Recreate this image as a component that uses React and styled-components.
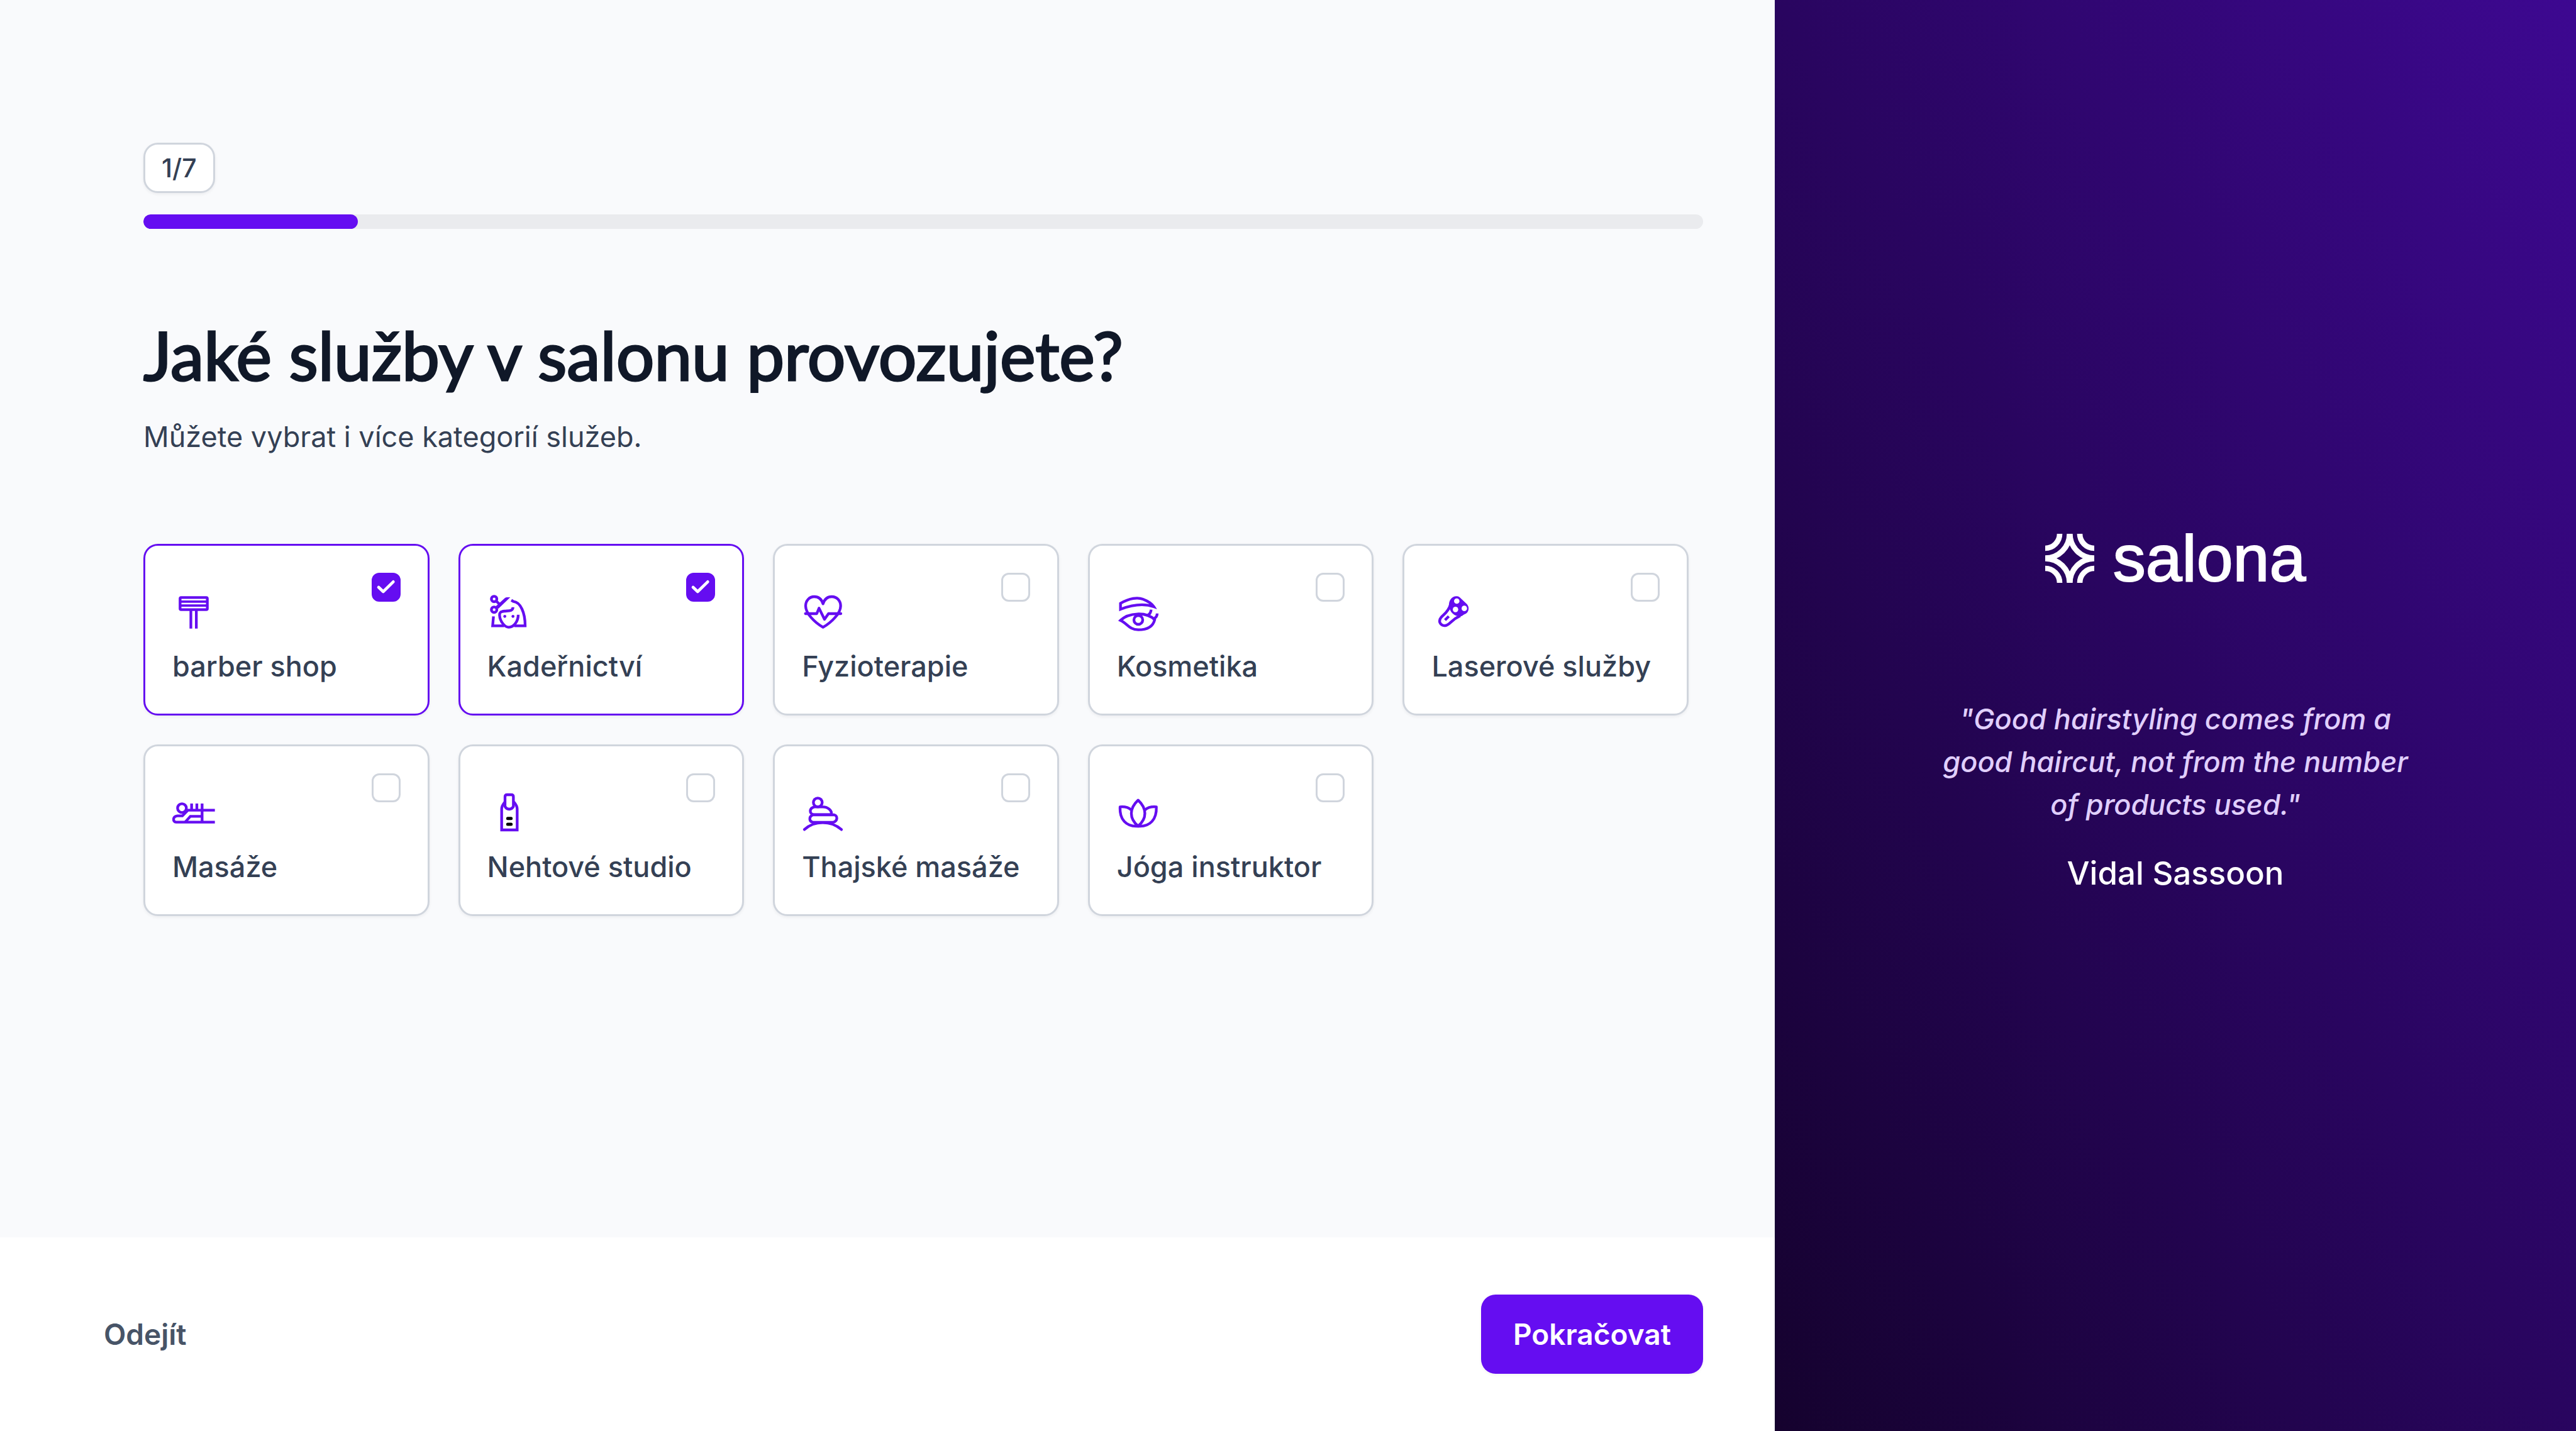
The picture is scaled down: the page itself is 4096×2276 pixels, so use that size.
import React, { useState } from "react";
import styled, { createGlobalStyle, css } from "styled-components";

const color = {
  brand: "#650df1",
  ink: "#101828",
  text: "#344054",
  muted: "#475467",
  line: "#d0d5dd",
  track: "#eaebee",
  canvas: "#f9fafc",
  lilac: "#e0cffc",
};

const GlobalStyle = createGlobalStyle`
  *, *::before, *::after { box-sizing: border-box; }
  body {
    margin: 0;
    background: #fff;
    font-family: Inter, "Liberation Sans", sans-serif;
    color: ${color.text};
  }
  h1, p, figure, fieldset { margin: 0; padding: 0; border: 0; }
`;

const Page = styled.div`
  display: flex;
  min-height: 100vh;
`;

const Wizard = styled.div`
  flex: 1;
  min-width: 0;
  display: flex;
  flex-direction: column;
  background: ${color.canvas};
`;

const Main = styled.main`
  flex: 1;
  display: flex;
  flex-direction: column;
  align-items: stretch;
  padding: 227px 114px 90px 228px;
`;

const StepBadge = styled.span`
  align-self: flex-start;
  padding: 7px 26px;
  border: 3px solid ${color.line};
  border-radius: 23px;
  background: #fff;
  box-shadow: 0 2px 5px rgba(16, 24, 40, 0.06);
  font-size: 41px;
  line-height: 60px;
  font-weight: 500;
`;

const Track = styled.div`
  height: 23px;
  margin-top: 34px;
  border-radius: 12px;
  background: ${color.track};
  overflow: hidden;
`;

const TrackFill = styled.div`
  height: 100%;
  border-radius: 12px;
  background: ${color.brand};
`;

const Title = styled.h1`
  margin-top: 132px;
  font-family: Lato, Inter, sans-serif;
  font-size: 107px;
  line-height: 136px;
  font-weight: 400;
  -webkit-text-stroke: 3px currentColor;
  color: ${color.ink};
`;

const Lead = styled.p`
  margin-top: 29px;
  font-size: 45px;
  line-height: 68px;
`;

const ServiceGrid = styled.fieldset`
  display: grid;
  grid-template-columns: repeat(5, minmax(0, 1fr));
  gap: 46px;
  margin-top: 136px;
  padding-right: 23px;
`;

const Card = styled.label`
  display: grid;
  grid-template-columns: 1fr auto;
  row-gap: 21px;
  padding: 43px;
  border: 3px solid ${(p) => (p.$active ? color.brand : color.line)};
  border-radius: 23px;
  background: #fff;
  box-shadow: 0 2px 5px rgba(16, 24, 40, 0.06);
  cursor: pointer;
`;

const ServiceIcon = styled.svg`
  width: 68px;
  height: 68px;
  margin-top: 28px;
  fill: none;
  stroke: ${color.brand};
  stroke-width: 13;
`;

const Tick = styled.span`
  display: grid;
  align-self: start;
  width: 46px;
  height: 46px;
  > * { grid-area: 1 / 1; }
`;

const TickInput = styled.input`
  appearance: none;
  width: 46px;
  height: 46px;
  margin: 0;
  border: 3px solid ${color.line};
  border-radius: 12px;
  background: #fff;
  cursor: pointer;
  ${(p) =>
    p.checked &&
    css`
      border-color: ${color.brand};
      background: ${color.brand};
    `}
`;

const TickMark = styled.svg`
  width: 46px;
  height: 46px;
  fill: none;
  stroke: #fff;
  stroke-width: 14;
  stroke-linecap: round;
  stroke-linejoin: round;
  pointer-events: none;
`;

const ServiceName = styled.span`
  grid-column: 1 / -1;
  font-size: 45px;
  line-height: 64px;
  font-weight: 500;
  white-space: nowrap;
`;

const Footer = styled.footer`
  display: flex;
  justify-content: space-between;
  align-items: center;
  padding: 91px 114px;
  background: #fff;
`;

const Button = styled.button`
  padding: 29px 51px;
  border: 0;
  border-radius: 23px;
  background: ${(p) => (p.$primary ? color.brand : "transparent")};
  color: ${(p) => (p.$primary ? "#fff" : color.muted)};
  box-shadow: ${(p) => (p.$primary ? "0 2px 5px rgba(16, 24, 40, 0.05)" : "none")};
  font: 600 46px/68px Inter, sans-serif;
  cursor: pointer;
`;

const Aside = styled.aside`
  flex: 0 0 1274px;
  display: flex;
  flex-direction: column;
  align-items: center;
  justify-content: center;
  padding-bottom: 4px;
  background: linear-gradient(to top right, #15022e 0%, #3d0891 100%);
`;

const Brand = styled.div`
  display: flex;
  align-items: center;
  gap: 30px;
  height: 78px;
  color: #fff;
`;

const BrandMark = styled.svg`
  width: 78px;
  height: 78px;
  fill: none;
  stroke: currentColor;
  stroke-width: 26;
`;

const BrandName = styled.span`
  font-family: "Liberation Sans", Arial, sans-serif;
  font-size: 104px;
  line-height: 78px;
  -webkit-text-stroke: 2px currentColor;
`;

const Quote = styled.figure`
  margin-top: 183px;
  max-width: 780px;
  text-align: center;
`;

const QuoteText = styled.blockquote`
  margin: 0;
  color: ${color.lilac};
  font-size: 45px;
  line-height: 68px;
  font-weight: 500;
  font-style: italic;
`;

const Author = styled.figcaption`
  margin-top: 41px;
  color: #fff;
  font-size: 51px;
  line-height: 68px;
  font-weight: 500;
`;

const icons = {
  barber: (
    <>
      <rect x="37" y="34" width="130" height="58" rx="5" />
      <path d="M38 53.500H166M38 72.500H166" strokeWidth="11" />
      <path d="M88.500 96V182M114.500 96V182" />
    </>
  ),
  hair: (
    <>
      <circle cx="32" cy="41" r="13" />
      <circle cx="32" cy="92" r="13" />
      <path d="M44 53L58 66" />
      <path d="M40 76L84 36Q88 33 93 33H109L52 88Z" fill={color.brand} stroke="none" />
      <path d="M114 47L124 53C158 56 180 106 180 169H128" />
      <path d="M29 124L25 169H80" />
      <path d="M122 80C122 100 100 97 82 99C62 101 58 106 58 118C60 150 84 176 102 176C128 176 147 145 147 116" />
      <circle cx="83" cy="124" r="7" fill={color.brand} stroke="none" />
      <circle cx="122" cy="124" r="7" fill={color.brand} stroke="none" />
    </>
  ),
  heart: (
    <g strokeLinecap="round" strokeLinejoin="round">
      <path d="M101 64C94 42 78 30 59 30C35 30 18 50 18 74C18 110 62 154 101 176C140 154 185 110 185 74C185 50 167 30 143 30C124 30 108 42 101 64Z" />
      <path d="M17 111H71L82 85L108 138L127 111H186" />
    </g>
  ),
  eye: (
    <>
      <path d="M17 62C60 36 100 32 124 42C150 52 166 62 176 78C130 62 70 70 17 90Z" />
      <path d="M17 143C55 106 140 100 180 140C172 172 148 188 102 188C58 188 50 158 17 143Z" />
      <circle cx="102" cy="141" r="21" />
      <path d="M163 92Q162 112 144 120M192 110Q192 128 174 136" />
    </>
  ),
  laser: (
    <>
      <path d="M90 70C82 100 62 112 47 128C30 148 44 170 66 168C88 166 92 142 138 121" />
      <path d="M120 28C131 28 136 34 142 40L170 66C184 82 178 108 158 114C150 118 146 124 138 124C108 124 88 104 84 74C82 50 96 28 120 28Z" fill={color.brand} stroke="none" />
      <circle cx="121" cy="51" r="13" fill="#fff" stroke="none" />
      <circle cx="115" cy="91" r="13" fill="#fff" stroke="none" />
      <circle cx="157" cy="86" r="13" fill="#fff" stroke="none" />
      <path d="M83 124L65 142" />
    </>
  ),
  massage: (
    <>
      <circle cx="46" cy="82" r="21" />
      <path d="M92 60V92M117 60V92M142 60V150M203 92H74L48 119H24C0 122 2 148 18 149H203" />
      <path d="M62 148L86 121H142" />
    </>
  ),
  nails: (
    <>
      <path d="M84 52Q68 70 68 86V186H142V86Q142 70 126 52" />
      <path d="M84 74V28Q84 18 94 18H114Q124 18 124 28V74Q118 86 104 87Q90 86 84 74Z" />
      <path d="M97 131H113M97 159H113" stroke="#000" strokeWidth="15" strokeLinecap="round" />
    </>
  ),
  stones: (
    <g strokeLinecap="round">
      <circle cx="76" cy="55" r="21" />
      <path d="M60 76C34 82 34 110 58 113H140C146 94 124 76 100 76Z" />
      <path d="M52 114C32 124 34 146 54 150H148C172 144 172 118 154 114Z" />
      <path d="M12 184C60 140 138 140 189 184" />
    </g>
  ),
  lotus: (
    <g strokeLinejoin="round">
      <path d="M101 44C58 84 58 132 101 168C144 132 144 84 101 44Z" />
      <path d="M68 90C54 78 36 74 15 76C12 134 42 172 101 168C160 172 190 134 188 76C166 74 148 78 134 90" />
    </g>
  ),
};

const services = [
  { id: "barber", name: "barber shop" },
  { id: "hair", name: "Kadeřnictví" },
  { id: "heart", name: "Fyzioterapie" },
  { id: "eye", name: "Kosmetika" },
  { id: "laser", name: "Laserové služby" },
  { id: "massage", name: "Masáže" },
  { id: "nails", name: "Nehtové studio" },
  { id: "stones", name: "Thajské masáže" },
  { id: "lotus", name: "Jóga instruktor" },
];

function ServiceCard({ service, checked, onToggle }) {
  return (
    <Card $active={checked}>
      <ServiceIcon viewBox="0 0 204 204" aria-hidden="true">
        {icons[service.id]}
      </ServiceIcon>
      <Tick>
        <TickInput type="checkbox" name="services" value={service.id} checked={checked} onChange={onToggle} />
        {checked && (
          <TickMark viewBox="0 0 138 138" aria-hidden="true">
            <path d="M33 69L55 90L103 43" />
          </TickMark>
        )}
      </Tick>
      <ServiceName>{service.name}</ServiceName>
    </Card>
  );
}

const corners = [
  [0, 0],
  [234, 0],
  [0, 234],
  [234, 234],
];

export default function App() {
  const [selected, setSelected] = useState(["barber", "hair"]);
  const progress = 13.75;
  const toggle = (id) =>
    setSelected((list) => (list.includes(id) ? list.filter((s) => s !== id) : [...list, id]));

  return (
    <>
      <GlobalStyle />
      <Page>
        <Wizard>
          <Main>
            <StepBadge>1/7</StepBadge>
            <Track role="progressbar" aria-label="1/7" aria-valuemin={0} aria-valuemax={7} aria-valuenow={1}>
              <TrackFill style={{ width: `${progress}%` }} />
            </Track>
            <Title>Jaké služby v salonu provozujete?</Title>
            <Lead>Můžete vybrat i více kategorií služeb.</Lead>
            <ServiceGrid>
              {services.map((s) => (
                <ServiceCard
                  key={s.id}
                  service={s}
                  checked={selected.includes(s.id)}
                  onToggle={() => toggle(s.id)}
                />
              ))}
            </ServiceGrid>
          </Main>
          <Footer>
            <Button type="button">Odejít</Button>
            <Button type="button" $primary>
              Pokračovat
            </Button>
          </Footer>
        </Wizard>
        <Aside>
          <Brand>
            <BrandMark viewBox="0 0 234 234" aria-hidden="true">
              {corners.map(([x, y]) => (
                <g key={`${x}-${y}`}>
                  <circle cx={x} cy={y} r="69" />
                  <circle cx={x} cy={y} r="116" />
                </g>
              ))}
            </BrandMark>
            <BrandName>salona</BrandName>
          </Brand>
          <Quote>
            <QuoteText>"Good hairstyling comes from a good haircut, not from the number of products used."</QuoteText>
            <Author>Vidal Sassoon</Author>
          </Quote>
        </Aside>
      </Page>
    </>
  );
}
